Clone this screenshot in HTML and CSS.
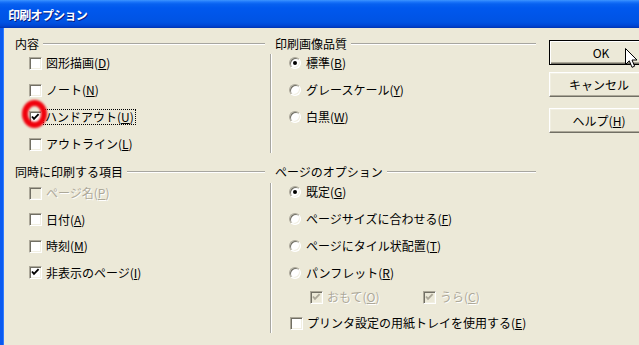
FILE: index.html
```html
<!DOCTYPE html>
<html lang="ja">
<head>
<meta charset="utf-8">
<title>印刷オプション</title>
<link rel="stylesheet" href="styles.css">
</head>
<body>
<div class="window">
  <div class="titlebar"><span class="title">印刷オプション</span></div>
  <div class="client">
    <div class="groups">
      <section class="group">
        <div class="ghead"><span class="glabel">内容</span><i class="rule"></i></div>
        <div class="gbody gbody-left">
          <div class="item"><span class="cb"></span><span class="txt">図形描画(<u>D</u>)</span></div>
          <div class="item"><span class="cb"></span><span class="txt">ノート(<u>N</u>)</span></div>
          <div class="item"><span class="cb checked"><svg viewBox="0 0 11 11" class="chk"><path d="M2 4.5 L4 6.8 L8.6 2.2" /></svg><span class="mark"></span></span><span class="txt focus">ハンドアウト(<u>U</u>)</span></div>
          <div class="item"><span class="cb"></span><span class="txt">アウトライン(<u>L</u>)</span></div>
        </div>
      </section>
      <section class="group">
        <div class="ghead ghead-right"><span class="glabel">印刷画像品質</span><i class="rule"></i></div>
        <div class="gbody gbody-right">
          <div class="item item-r"><span class="rb on"></span><span class="txt">標準(<u>B</u>)</span></div>
          <div class="item item-r"><span class="rb"></span><span class="txt">グレースケール(<u>Y</u>)</span></div>
          <div class="item item-r"><span class="rb"></span><span class="txt">白黒(<u>W</u>)</span></div>
        </div>
      </section>
      <section class="group">
        <div class="ghead"><span class="glabel">同時に印刷する項目</span><i class="rule"></i></div>
        <div class="gbody gbody-left gbody-bottom">
          <div class="item disabled"><span class="cb"></span><span class="txt">ページ名(<u>P</u>)</span></div>
          <div class="item"><span class="cb"></span><span class="txt">日付(<u>A</u>)</span></div>
          <div class="item"><span class="cb"></span><span class="txt">時刻(<u>M</u>)</span></div>
          <div class="item"><span class="cb checked"><svg viewBox="0 0 11 11" class="chk"><path d="M2 4.5 L4 6.8 L8.6 2.2" /></svg></span><span class="txt">非表示のページ(<u>I</u>)</span></div>
        </div>
      </section>
      <section class="group">
        <div class="ghead ghead-right"><span class="glabel">ページのオプション</span><i class="rule"></i></div>
        <div class="gbody gbody-right gbody-bottom">
          <div class="item item-r"><span class="rb on"></span><span class="txt">既定(<u>G</u>)</span></div>
          <div class="item item-r"><span class="rb"></span><span class="txt">ページサイズに合わせる(<u>F</u>)</span></div>
          <div class="item item-r"><span class="rb"></span><span class="txt">ページにタイル状配置(<u>T</u>)</span></div>
          <div class="item item-r"><span class="rb"></span><span class="txt">パンフレット(<u>R</u>)</span></div>
          <div class="item item-sub">
            <div class="subopt disabled"><span class="cb checked"><svg viewBox="0 0 11 11" class="chk"><path d="M2 4.5 L4 6.8 L8.6 2.2" /></svg></span><span class="txt">おもて(<u>O</u>)</span></div>
            <div class="subopt disabled"><span class="cb checked"><svg viewBox="0 0 11 11" class="chk"><path d="M2 4.5 L4 6.8 L8.6 2.2" /></svg></span><span class="txt">うら(<u>C</u>)</span></div>
          </div>
          <div class="item item-tray"><span class="cb"></span><span class="txt">プリンタ設定の用紙トレイを使用する(<u>E</u>)</span></div>
        </div>
      </section>
    </div>
    <div class="buttons">
      <button class="btn btn-default">OK</button>
      <button class="btn btn-cancel">キャンセル</button>
      <button class="btn btn-help">ヘルプ(<u>H</u>)</button>
    </div>
  </div>
  <svg class="cursor" viewBox="0 0 13 21" width="13" height="21"><path d="M0.5 0.5 L0.5 16.5 L4.3 12.8 L7 19.3 L9.6 18.2 L7 12 L12 12 Z" fill="#fff" stroke="#000" stroke-width="1" stroke-linejoin="miter"/></svg>
</div>
</body>
</html>
```

FILE: styles.css
```css
html, body {
  margin: 0;
  padding: 0;
  width: 639px;
  height: 345px;
  overflow: hidden;
  background: #ECE9D8;
}

.window {
  position: relative;
  width: 639px;
  height: 345px;
  display: flex;
  flex-direction: column;
  font-family: "Noto Sans CJK JP", "Noto Sans", sans-serif;
  font-size: 12px;
  line-height: 14px;
  color: #000;
}

.titlebar {
  height: 28px;
  flex: none;
  display: flex;
  align-items: center;
  padding-left: 8px;
  background: linear-gradient(#3D95FF 0px, #1A74FA 2px, #0861F0 4px, #0058EE 8px, #0055E8 16px, #0053E3 22px, #0049D8 25px, #003DC4 27px, #0033B0 28px);
}

.title {
  color: #fff;
  font-weight: bold;
  font-size: 12px;
  letter-spacing: -0.7px;
  text-shadow: 1px 1px 0 #0A1E80;
  margin-top: 2px;
}

.client {
  flex: 1;
  display: flex;
  overflow: hidden;
  border-left: 3px solid #0A5AF0;
  box-shadow: inset 1px 0 0 #2F7BFF;
  padding-left: 12px;
}

.groups {
  display: grid;
  grid-template-columns: 250px 266px;
  grid-template-rows: auto auto;
  column-gap: 5px;
  row-gap: 12px;
  padding-top: 9px;
  align-content: start;
}

.group {
  display: flex;
  flex-direction: column;
}

.ghead {
  height: 14px;
  display: flex;
  align-items: center;
}

.ghead-right {
  padding-left: 5px;
}

.glabel {
  white-space: nowrap;
}

.rule {
  flex: 1;
  height: 1px;
  margin-left: 4px;
  margin-top: -1px;
  background: #A7A6A0;
  box-shadow: 0 1px 0 #fff;
}

.gbody {
  display: flex;
  flex-direction: column;
  gap: 9px;
  margin-top: 3px;
  flex: 1;
}

.gbody-right {
  border-left: 1px solid #A7A6A0;
  box-shadow: inset 1px 0 0 #fff;
}

.gbody-bottom {
  margin-top: 4px;
  height: 150px;
  flex: none;
}

.gbody-left.gbody-bottom {
  padding-top: 1px;
  height: 149px;
  gap: 8.5px;
}

.item {
  height: 18px;
  display: flex;
  align-items: center;
  padding-left: 14px;
  white-space: nowrap;
}

.item-r {
  padding-left: 18px;
}

.item-r .txt {
  margin-left: 5px;
}

.item-sub {
  padding-left: 39px;
  margin-top: -3px;
}

.item-tray {
  padding-left: 19px;
  margin-top: -1px;
}

.subopt {
  width: 120px;
  display: flex;
  align-items: center;
}

.txt {
  margin-left: 4px;
}

.txt u {
  text-decoration: underline;
  text-underline-offset: 1px;
}

.focus {
  border: 1px dotted #000;
  padding: 0 1px;
  margin-left: 1px;
}

.cb {
  position: relative;
  width: 13px;
  height: 13px;
  box-sizing: border-box;
  flex: none;
  background: #fff;
  border: 1px solid;
  border-color: #ACA899 #fff #fff #ACA899;
  box-shadow: inset 1px 1px 0 #716F64, inset -1px -1px 0 #F1EFE2;
}

.chk {
  position: absolute;
  left: 0;
  top: 0;
  width: 11px;
  height: 11px;
}

.chk path {
  fill: none;
  stroke: #000;
  stroke-width: 1.9;
}

.disabled .cb {
  background: #ECE9D8;
}

.disabled .chk path {
  stroke: #ACA899;
}

.disabled .txt {
  color: #ACA899;
  text-shadow: 1px 1px 0 #fff;
}

.mark {
  position: absolute;
  left: -8px;
  top: -12px;
  width: 13px;
  height: 16px;
  border: 6px solid #F0000C;
  border-radius: 50%;
  filter: blur(0.9px);
}

.rb {
  position: relative;
  width: 12px;
  height: 12px;
  box-sizing: border-box;
  flex: none;
  border-radius: 50%;
  background: #fff;
  border: 1px solid;
  border-color: #ACA899 #fff #fff #ACA899;
  box-shadow: inset 1px 1px 0 #716F64, inset -1px -1px 0 #F1EFE2;
}

.rb.on::after {
  content: "";
  position: absolute;
  left: 3px;
  top: 3px;
  width: 4px;
  height: 4px;
  border-radius: 50%;
  background: #000;
}

.buttons {
  display: flex;
  flex-direction: column;
  margin-left: 13px;
  padding-top: 12px;
  flex: none;
  width: 104px;
}

.btn {
  width: 104px;
  height: 25px;
  padding: 0;
  margin: 0;
  font-family: "Noto Sans CJK JP", "Noto Sans", sans-serif;
  font-size: 12px;
  line-height: 14px;
  color: #000;
  background: #ECE9D8;
  border: 1px solid;
  border-color: #fff #716F64 #716F64 #fff;
  box-shadow: inset -1px -1px 0 #ACA899, inset 1px 1px 0 #F1EFE2;
  padding-right: 4px;
}

.btn-default {
  border: 1px solid #000;
  box-shadow: inset 1px 1px 0 #fff, inset -1px -1px 0 #716F64, inset -2px -2px 0 #ACA899;
  padding-right: 0;
}

.btn-cancel {
  margin-top: 7px;
}

.btn-help {
  margin-top: 11px;
}

.cursor {
  position: absolute;
  left: 625px;
  top: 48px;
}
```
